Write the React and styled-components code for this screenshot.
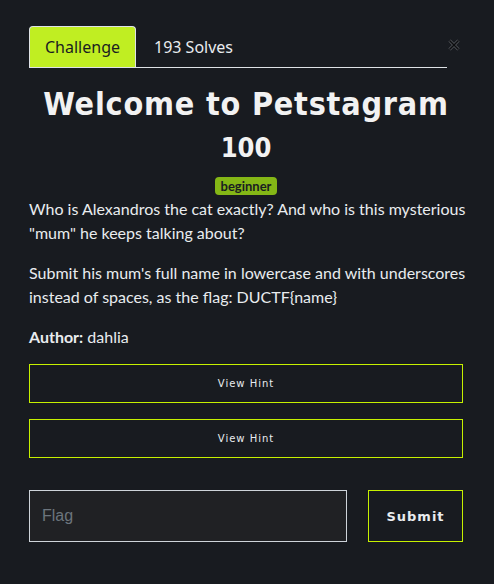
import React from 'react';
import styled, { createGlobalStyle } from 'styled-components';

const GlobalStyle = createGlobalStyle`
  html, body {
    margin: 0;
    padding: 0;
    background: #181b20;
  }
  body {
    font-family: Lato, "Noto Sans", sans-serif;
    color: #e9ecef;
  }
`;

const Modal = styled.div`
  width: 494px;
  height: 584px;
  box-sizing: border-box;
  padding: 26px 31px 0 29px;
  background: #181b20;
  position: relative;
`;

const TabBar = styled.div`
  display: flex;
  align-items: stretch;
  width: 418px;
  border-bottom: 1px solid #dee2e6;
  height: 41px;
`;

const Tab = styled.div`
  box-sizing: border-box;
  display: flex;
  align-items: center;
  padding: 0 16px;
  font-family: "Noto Sans", sans-serif;
  font-size: 16px;
  color: ${p => (p.active ? '#1a1d21' : '#e9ecef')};
  background: ${p => (p.active ? '#c0ee22' : 'transparent')};
  border: 1px solid ${p => (p.active ? '#dee2e6' : 'transparent')};
  border-bottom: none;
  border-radius: 4px 4px 0 0;
  width: ${p => (p.active ? '107px' : 'auto')};
  justify-content: ${p => (p.active ? 'center' : 'flex-start')};
  margin-right: ${p => (p.active ? '1px' : '0')};
`;

const Close = styled.div`
  position: absolute;
  top: 35px;
  left: 448px;
  width: 12px;
  height: 12px;
`;

const Title = styled.h1`
  margin: 16px -10px 0;
  text-align: center;
  font-family: "DejaVu Sans Condensed", "DejaVu Sans", sans-serif;
  font-stretch: condensed;
  font-weight: bold;
  font-size: 32px;
  letter-spacing: 0.8px;
  line-height: 40px;
  color: #f2f2f2;
`;

const Points = styled.div`
  text-align: center;
  font-family: "DejaVu Sans Condensed", "DejaVu Sans", sans-serif;
  font-stretch: condensed;
  font-weight: bold;
  font-size: 27px;
  line-height: 34px;
  color: #f2f2f2;
  margin-top: 7px;
`;

const BadgeRow = styled.div`
  display: flex;
  justify-content: center;
  margin-top: 12px;
`;

const Badge = styled.span`
  background: #84b716;
  color: #1a1d21;
  font-family: Lato, sans-serif;
  font-weight: bold;
  font-size: 13px;
  line-height: 18px;
  padding: 0 6px;
  border-radius: 4px;
`;

const Text = styled.p`
  margin: 0 0 16px;
  font-size: 16px;
  line-height: 24px;
  color: #e9ecef;
`;

const Description = styled.div`
  margin-top: 2px;
  width: 450px;
`;

const HintButton = styled.button`
  appearance: none;
  display: block;
  width: 434px;
  height: 39px;
  box-sizing: border-box;
  background: #181b20;
  border: 1px solid #c6f000;
  color: #e9ecef;
  font-family: "DejaVu Sans", sans-serif;
  font-size: 10px;
  letter-spacing: 1px;
  margin-bottom: 16px;
  padding: 0;
  outline: none;
  &:hover, &:focus {
    border-color: #c6f000;
    outline: none;
  }
`;

const Hints = styled.div`
  margin-top: -1px;
`;

const FlagRow = styled.div`
  display: flex;
  gap: 21px;
  margin-top: 32px;
`;

const FlagInput = styled.input`
  box-sizing: border-box;
  width: 318px;
  height: 52px;
  background: #202124;
  border: 1px solid #ced4da;
  color: #e9ecef;
  font-family: "Liberation Sans", sans-serif;
  font-size: 16px;
  padding: 0 12px;
  outline: none;
  &::placeholder {
    color: #6c757d;
  }
`;

const SubmitButton = styled.button`
  appearance: none;
  box-sizing: border-box;
  width: 95px;
  height: 52px;
  background: #181b20;
  border: 1px solid #c6f000;
  color: #e9ecef;
  font-family: "DejaVu Sans", sans-serif;
  font-weight: 600;
  font-size: 13px;
  letter-spacing: 1px;
  padding: 0;
  outline: none;
`;

const flagText = "Submit his mum's full name in lowercase and with underscores instead of spaces, as the flag: DUCTF{name}";

export default function App() {
  return (
    <>
      <GlobalStyle />
      <Modal>
        <TabBar>
          <Tab active>Challenge</Tab>
          <Tab>193 Solves</Tab>
        </TabBar>
        <Close>
          <svg width="12" height="12" viewBox="0 0 12 12">
            <path d="M1.5 1.5 L10.5 10.5 M10.5 1.5 L1.5 10.5" stroke="#5a5d62" strokeWidth="3" />
            <path d="M1.5 1.5 L10.5 10.5 M10.5 1.5 L1.5 10.5" stroke="#0c0d0f" strokeWidth="1.6" />
          </svg>
        </Close>
        <Title>Welcome to Petstagram</Title>
        <Points>100</Points>
        <BadgeRow>
          <Badge>beginner</Badge>
        </BadgeRow>
        <Description>
          <Text>Who is Alexandros the cat exactly? And who is this mysterious "mum" he keeps talking about?</Text>
          <Text>{flagText}</Text>
          <Text><b>Author:</b> dahlia</Text>
        </Description>
        <Hints>
          <HintButton>View Hint</HintButton>
          <HintButton>View Hint</HintButton>
        </Hints>
        <FlagRow>
          <FlagInput placeholder="Flag" />
          <SubmitButton>Submit</SubmitButton>
        </FlagRow>
      </Modal>
    </>
  );
}
